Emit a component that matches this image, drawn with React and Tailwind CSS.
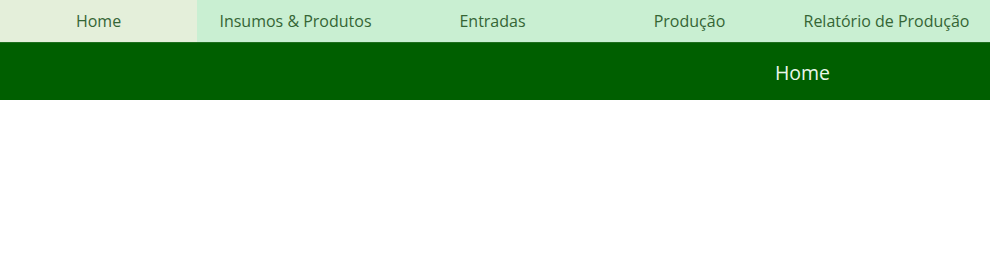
import React from 'react'

const tabs = ['Home', 'Insumos & Produtos', 'Entradas', 'Produção', 'Relatório de Produção']

export default function App() {
  const active = 'Home'

  return (
    <div className="w-full min-h-[270px] bg-white" style={{ fontFamily: '"Open Sans", "Liberation Sans", sans-serif' }}>
      {/* Menu de abas */}
      <nav className="flex h-[42px] bg-[#c9efd2]">
        {tabs.map((t) => (
          <div
            key={t}
            className={`w-[197px] flex items-center justify-center text-[16px] text-[#356535] ${t === active ? 'bg-[#e4efda]' : ''}`}
          >
            {t}
          </div>
        ))}
      </nav>

      {/* Barra de título */}
      <div className="flex h-[58px] bg-[#005f00] border-t border-[#1f6f1f]">
        <div className="flex-1" />
        <div className="w-[375px] flex items-center justify-center pt-[2px] text-[19.5px] text-[#eaf7ea]">
          Home
        </div>
      </div>
    </div>
  )
}
